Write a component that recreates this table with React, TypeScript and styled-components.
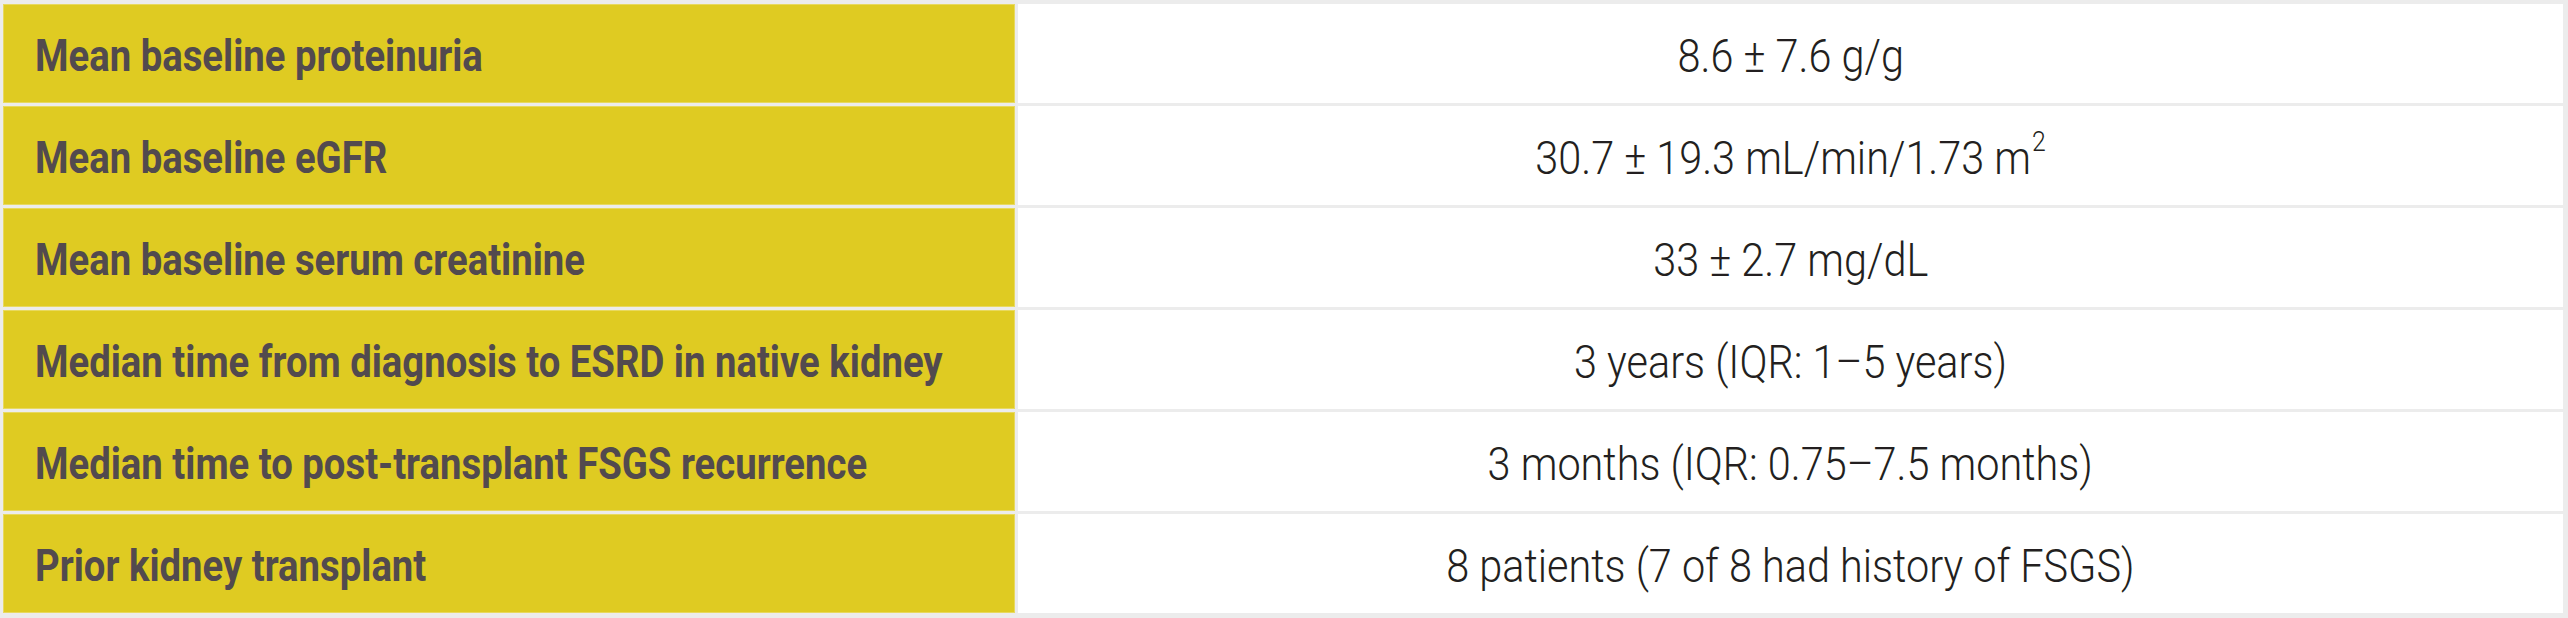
import React from "react";
import styled, { createGlobalStyle } from "styled-components";

const GlobalStyle = createGlobalStyle`
  html, body {
    margin: 0;
    padding: 0;
    background: #ffffff;
  }
  body {
    font-family: Roboto, "Liberation Sans", sans-serif;
  }
`;

const Table = styled.div`
  display: grid;
  grid-template-columns: 1012px 1fr;
  grid-auto-rows: 99px;
  gap: 3px;
  padding: 4px 5px 5px 3px;
  width: 2568px;
  box-sizing: border-box;
  background: #ececec;
`;

const LabelCell = styled.div`
  display: flex;
  align-items: center;
  padding-left: 32px;
  background: #dfcb22;
  box-shadow: inset 0 0 0 1px rgba(255, 255, 255, 0.28);
  overflow: hidden;
`;

const ValueCell = styled.div`
  display: flex;
  align-items: center;
  justify-content: center;
  background: #ffffff;
  overflow: hidden;
`;

const LabelText = styled.span`
  display: inline-block;
  font-family: Roboto, "Liberation Sans", sans-serif;
  font-weight: 700;
  font-size: 44px;
  line-height: 1;
  color: #524a4e;
  white-space: nowrap;
  transform: scaleX(0.87);
  transform-origin: left center;
  margin-top: 4px;
`;

const ValueText = styled.span`
  display: inline-block;
  font-family: Roboto, "Liberation Sans", sans-serif;
  font-weight: 300;
  font-size: 46px;
  line-height: 1;
  color: #231f20;
  white-space: nowrap;
  transform: scaleX(0.9);
  transform-origin: center center;
  margin-top: 4px;
`;

const Sup = styled.sup`
  font-size: 0.6em;
  line-height: 0;
  vertical-align: 0.8em;
  margin-left: 1px;
`;

const rows: { label: string; value: React.ReactNode }[] = [
  { label: "Mean baseline proteinuria", value: "8.6 ± 7.6 g/g" },
  {
    label: "Mean baseline eGFR",
    value: (
      <>
        30.7 ± 19.3 mL/min/1.73 m<Sup>2</Sup>
      </>
    ),
  },
  { label: "Mean baseline serum creatinine", value: "33 ± 2.7 mg/dL" },
  {
    label: "Median time from diagnosis to ESRD in native kidney",
    value: "3 years (IQR: 1–5 years)",
  },
  {
    label: "Median time to post-transplant FSGS recurrence",
    value: "3 months (IQR: 0.75–7.5 months)",
  },
  {
    label: "Prior kidney transplant",
    value: "8 patients (7 of 8 had history of FSGS)",
  },
];

export default function App() {
  return (
    <>
      <GlobalStyle />
      <Table>
        {rows.map((r) => (
          <React.Fragment key={r.label}>
            <LabelCell>
              <LabelText>{r.label}</LabelText>
            </LabelCell>
            <ValueCell>
              <ValueText>{r.value}</ValueText>
            </ValueCell>
          </React.Fragment>
        ))}
      </Table>
    </>
  );
}
